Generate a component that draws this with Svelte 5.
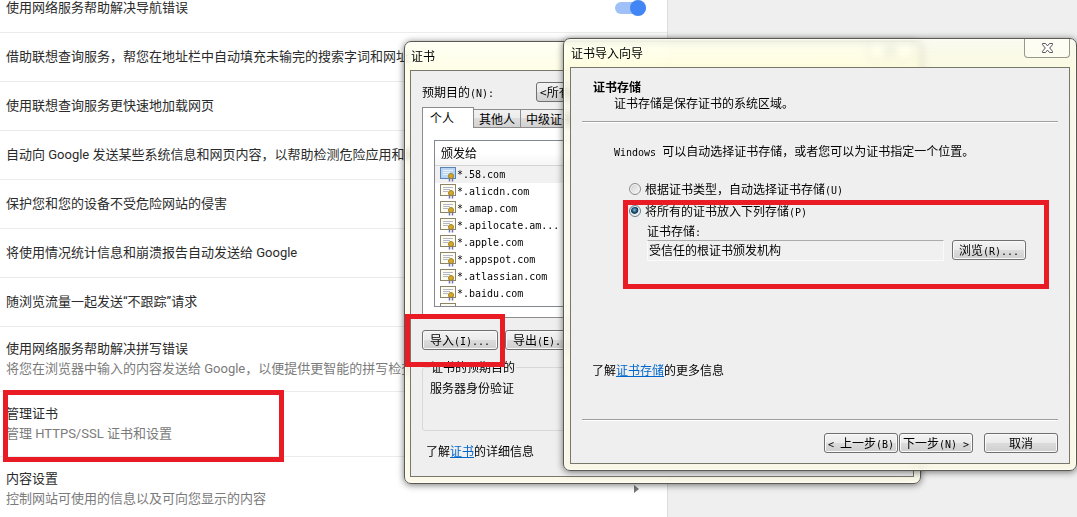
<script lang="ts">
  type Setting = {
    title: string;
    sub?: string;
    control?: "toggle" | "arrow";
    marked?: boolean;
  };

  const settings: Setting[] = [
    { title: "使用网络服务帮助解决导航错误", control: "toggle" },
    { title: "借助联想查询服务，帮您在地址栏中自动填充未输完的搜索字词和网址" },
    { title: "使用联想查询服务更快速地加载网页" },
    { title: "自动向 Google 发送某些系统信息和网页内容，以帮助检测危险应用和网站" },
    { title: "保护您和您的设备不受危险网站的侵害" },
    { title: "将使用情况统计信息和崩溃报告自动发送给 Google" },
    { title: "随浏览流量一起发送“不跟踪”请求" },
    {
      title: "使用网络服务帮助解决拼写错误",
      sub: "将您在浏览器中输入的内容发送给 Google，以便提供更智能的拼写检查",
    },
    { title: "管理证书", sub: "管理 HTTPS/SSL 证书和设置", marked: true },
    { title: "内容设置", sub: "控制网站可使用的信息以及可向您显示的内容", control: "arrow" },
  ];

  const certs = [
    "*.58.com",
    "*.alicdn.com",
    "*.amap.com",
    "*.apilocate.am...",
    "*.apple.com",
    "*.appspot.com",
    "*.atlassian.com",
    "*.baidu.com",
    "",
  ];

  let navErrors = $state(true);
  let placement = $state("store");
  let store = $state("受信任的根证书颁发机构");
  let selected = $state(0);
</script>

{#snippet closeIcon()}
  <svg width="13" height="12" viewBox="0 0 13 12" aria-hidden="true">
    <path
      d="M1.5 1.500h3l2 2.400 2-2.400h3v1.200L8.700 6l2.800 3.300v1.200h-3l-2-2.400-2 2.400h-3V9.300L4.300 6 1.500 2.700z"
      fill="#fff"
      stroke="#555"
      stroke-width="1"
    />
  </svg>
{/snippet}

<main class="panel" lang="zh-CN">
  {#each settings as item}
    <div class="setting">
      <div class="text">
        <div class="title">{item.title}</div>
        {#if item.sub}<div class="sub">{item.sub}</div>{/if}
      </div>
      {#if item.control === "toggle"}
        <input class="toggle" type="checkbox" aria-label={item.title} bind:checked={navErrors} />
      {:else if item.control === "arrow"}
        <svg class="arrow" width="5" height="8" viewBox="0 0 5 8" aria-hidden="true">
          <path d="M0 0l5 4-5 4z" fill="#777" />
        </svg>
      {/if}
      {#if item.marked}<div class="mark mark-setting"></div>{/if}
    </div>
  {/each}
</main>

<section class="window certs" lang="zh-CN" aria-label="证书">
  <header class="titlebar">
    <span>证书</span>
    <button class="close" aria-label="关闭">{@render closeIcon()}</button>
  </header>
  <div class="client">
    <div class="purpose">
      <label for="purpose">预期目的<span class="mono">(N):</span></label>
      <select id="purpose">
        <option>&lt;所有&gt;</option>
      </select>
    </div>

    <div class="tabs">
      <button class="tab active">个人</button>
      <button class="tab">其他人</button>
      <button class="tab">中级证书</button>
    </div>
    <div class="tabpanel">
      <div class="list">
        <table>
          <thead>
            <tr><th>颁发给</th></tr>
          </thead>
          <tbody>
            {#each certs as name, i}
              <tr class:selected={i === selected} onclick={() => (selected = i)}>
                <td>
                  <svg width="17" height="15" viewBox="0 0 17 15" aria-hidden="true">
                    <rect
                      x="0.5"
                      y="0.5"
                      width="15"
                      height="11"
                      fill={i === selected ? "#b9d5f2" : "#fdfcf2"}
                      stroke={i === selected ? "#5c83b5" : "#8d8468"}
                    />
                    <path d="M3 3.500h10M3 5.500h7M3 7.500h5" stroke={i === selected ? "#e9f3fd" : "#b4b7c6"} />
                    <path d="M9.500 10v4.500M12.500 10v4.500" stroke="#6f73b4" stroke-width="1.500" />
                    <circle cx="11" cy="9" r="2.500" fill="#dba62c" stroke="#9a8420" />
                  </svg>
                  <span class="mono">{name}</span>
                </td>
              </tr>
            {/each}
          </tbody>
        </table>
      </div>
    </div>

    <div class="actions">
      <div class="marked">
        <button class="btn">导入<span class="mono">(I)...</span></button>
        <div class="mark mark-import"></div>
      </div>
      <button class="btn">导出<span class="mono">(E)...</span></button>
    </div>

    <fieldset>
      <legend>证书的预期目的</legend>
      <p>服务器身份验证</p>
    </fieldset>

    <p class="more">了解<a href="#cert">证书</a>的详细信息</p>
  </div>
</section>

<section class="window wizard" lang="zh-CN" aria-label="证书导入向导">
  <header class="titlebar">
    <span>证书导入向导</span>
    <button class="close" aria-label="关闭">{@render closeIcon()}</button>
  </header>
  <div class="client">
    <h2>证书存储</h2>
    <p class="intro">证书存储是保存证书的系统区域。</p>
    <hr />
    <p class="hint"><span class="mono">{"Windows "}</span>可以自动选择证书存储，或者您可以为证书指定一个位置。</p>

    <label class="choice auto">
      <input type="radio" value="auto" bind:group={placement} />
      <span>根据证书类型，自动选择证书存储<span class="mono">(U)</span></span>
    </label>
    <div class="marked">
      <label class="choice">
        <input type="radio" value="store" bind:group={placement} />
        <span>将所有的证书放入下列存储<span class="mono">(P)</span></span>
      </label>
      <label class="storelabel" for="store">证书存储<span class="mono">:</span></label>
      <div class="storerow">
        <input id="store" type="text" bind:value={store} readonly />
        <button class="btn">浏览<span class="mono">(R)...</span></button>
      </div>
      <div class="mark mark-store"></div>
    </div>

    <p class="more">了解<a href="#store">证书存储</a>的更多信息</p>
    <hr />
    <div class="footer">
      <button class="btn"><span class="mono">{"< "}</span>上一步<span class="mono">(B)</span></button>
      <button class="btn">下一步<span class="mono">{"(N) >"}</span></button>
      <button class="btn cancel">取消</button>
    </div>
  </div>
</section>

<style>
  :global(html) {
    overflow: hidden;
  }
  :global(body) {
    background: #efefef;
    overflow: hidden;
  }

  .panel {
    width: 62%;
    margin-top: -16px;
    background: #fff;
    border-right: 1px solid #dcdcdc;
    box-sizing: border-box;
    font: 13px/20px Roboto, "Noto Sans CJK SC", sans-serif;
    color: #2b2b2b;
  }
  .setting {
    position: relative;
    display: flex;
    align-items: center;
    justify-content: space-between;
    min-height: 48px;
    padding: 0 21px 0 6px;
    border-bottom: 1px solid #ececec;
  }
  .setting:has(.sub) {
    min-height: 64px;
  }
  .text {
    white-space: nowrap;
    padding-bottom: 1px;
  }
  .sub {
    color: #7b7b7b;
  }
  .toggle {
    appearance: none;
    position: relative;
    width: 31px;
    height: 12px;
    margin: 0;
    border-radius: 6px;
    background: #bbb;
  }
  .toggle:checked {
    background: #a0c0f8;
  }
  .toggle::after {
    content: "";
    position: absolute;
    top: -2px;
    left: 0;
    width: 16px;
    height: 16px;
    border-radius: 50%;
    background: #fff;
  }
  .toggle:checked::after {
    left: 15px;
    background: #4285f4;
  }
  .arrow {
    margin-right: 7px;
  }

  .mark {
    position: absolute;
    border: 5px solid #e91c26;
    box-sizing: border-box;
    pointer-events: none;
  }
  .mark-setting {
    top: -2px;
    left: 3px;
    width: 281px;
    height: 72px;
  }
  .mark-import {
    top: -16px;
    left: -17px;
    width: 100px;
    height: 53px;
  }
  .mark-store {
    top: -3px;
    left: 41px;
    right: 9px;
    bottom: -28px;
  }
  .marked {
    position: relative;
  }

  .window {
    position: absolute;
    box-sizing: border-box;
    padding: 0 6px 6px;
    border: 1px solid #5a5a52;
    border-radius: 7px;
    background: linear-gradient(#fffff0b0, #fffeddb8 28px, #fbf9e8c8 60px, #fbf8e6d8);
    backdrop-filter: blur(3px);
    box-shadow:
      inset 0 0 0 1px #fffffac0,
      0 1px 7px #0000008c;
    font: 12px/16px "Noto Sans CJK SC", sans-serif;
    color: #000;
    white-space: nowrap;
  }
  .certs {
    top: 41px;
    left: 404px;
    width: 48%;
    padding-left: 5px;
  }
  .wizard {
    top: 38px;
    left: 563px;
    right: 0;
  }
  .titlebar {
    display: flex;
    justify-content: space-between;
    height: 28px;
    padding-left: 1px;
    line-height: 28px;
  }
  .close {
    display: grid;
    place-items: center;
    width: 46px;
    height: 19px;
    padding: 0;
    border: 1px solid #98988a;
    border-top: 0;
    border-radius: 0 0 4px 4px;
    background: #fffffa80;
  }
  .client {
    border: 1px solid #77776c;
    padding: 0 11px;
    background: #efefef;
  }
  .mono {
    font: 10px/12px "DejaVu Sans Mono", monospace;
    white-space: pre;
  }
  p,
  h2 {
    margin: 0;
    font-size: 12px;
    line-height: 16px;
  }
  a {
    color: #0066cc;
  }
  hr {
    height: 1px;
    margin: 0;
    border: 0;
    background: #a0a0a0;
    box-shadow: 0 1px #fff;
  }
  .btn {
    width: 74px;
    height: 20px;
    padding: 0;
    border: 1px solid #707070;
    border-radius: 3px;
    background: linear-gradient(#f3f3f3, #ebebeb 50%, #dcdcdc 50%, #cfcfcf);
    box-shadow: inset 0 0 0 1px #fafafa;
    font: 12px/16px "Noto Sans CJK SC", sans-serif;
    color: #000;
    white-space: nowrap;
  }

  .purpose {
    display: flex;
    align-items: center;
    margin-top: 11px;
  }
  .purpose label {
    width: 114px;
  }
  .purpose select {
    appearance: none;
    flex: 1;
    height: 20px;
    padding: 0 3px;
    border: 1px solid #707070;
    border-radius: 3px;
    background: linear-gradient(#f3f3f3, #ebebeb 50%, #dddddd 50%, #d0d0d0);
    font: 12px/16px "Noto Sans CJK SC", sans-serif;
    color: #000;
  }
  .tabs {
    display: flex;
    align-items: flex-end;
    margin-top: 5px;
  }
  .tab {
    height: 18px;
    padding: 0 5px;
    border: 1px solid #8c8c8c;
    border-left: 0;
    border-bottom: 0;
    background: linear-gradient(#f2f2f2, #ebebeb 50%, #dddddd 50%, #d2d2d2);
    font: 12px/16px "Noto Sans CJK SC", sans-serif;
    color: #000;
  }
  .tab.active {
    position: relative;
    width: 52px;
    height: 21px;
    margin-bottom: -1px;
    padding: 0 15px 0 7px;
    border-left: 1px solid #8c8c8c;
    background: #fff;
    text-align: left;
  }
  .tabpanel {
    padding: 12px 12px 10px 11px;
    border: 1px solid #8c8c8c;
    background: #fff;
  }
  .list {
    height: 165px;
    overflow: hidden;
    border: 1px solid #828790;
  }
  table {
    width: 100%;
    border-collapse: collapse;
  }
  th {
    height: 24px;
    padding: 0 6px;
    border-bottom: 1px solid #d5d5d5;
    background: linear-gradient(#fff 50%, #f5f5f5);
    font-weight: normal;
    text-align: left;
  }
  td {
    display: flex;
    align-items: center;
    height: 17px;
    padding: 0 0 0 5px;
  }
  tr.selected {
    background: #f1f1f1;
  }
  .actions {
    display: flex;
    gap: 7px;
    margin-top: 12px;
  }
  .actions .btn {
    width: 76px;
  }
  fieldset {
    margin: 9px 0 0;
    padding: 5px 7px 34px;
    border: 1px solid #d8d8d8;
    border-radius: 3px;
  }
  legend {
    padding: 0 1px;
  }
  .certs .more {
    margin-top: 12px;
    padding: 0 4px 17px;
  }

  h2 {
    margin-top: 11px;
    padding-left: 11px;
  }
  .intro {
    padding: 0 32px 10px;
  }
  .hint {
    padding: 21px 32px 22px;
  }
  .choice {
    display: flex;
    align-items: center;
    gap: 4px;
    padding-left: 47px;
  }
  .auto {
    margin-bottom: 6px;
  }
  .choice input {
    appearance: none;
    width: 12px;
    height: 12px;
    margin: 0;
    border: 1px solid #8a8d8f;
    border-radius: 50%;
    background: linear-gradient(135deg, #cfcfcf, #fbfbfb);
    box-shadow: inset 0 0 0 1px #f4f4f4;
  }
  .choice input:checked {
    border-color: #6d7f8c;
    background: radial-gradient(circle at 45% 40%, #7fc4e0, #1c4f70 30%, #123850 42%, #e2ebf0 52%);
  }
  .storelabel {
    display: block;
    margin: 4px 0 1px;
    padding-left: 65px;
  }
  .storerow {
    display: flex;
    gap: 8px;
    padding: 0 32px 0 65px;
  }
  .storerow input {
    flex: 1;
    min-width: 0;
    height: 21px;
    box-sizing: border-box;
    padding: 0 1px 2px;
    border: 1px solid #fafafa;
    border-top-color: #ababab;
    background: #f0f0f0;
    font: 12px/16px "Noto Sans CJK SC", sans-serif;
    color: #000;
  }
  .wizard .more {
    padding: 101px 10px 41px;
  }
  .footer {
    display: flex;
    justify-content: flex-end;
    gap: 1px;
    padding: 13px 0 10px;
  }
  .cancel {
    margin-left: 10px;
  }
</style>
